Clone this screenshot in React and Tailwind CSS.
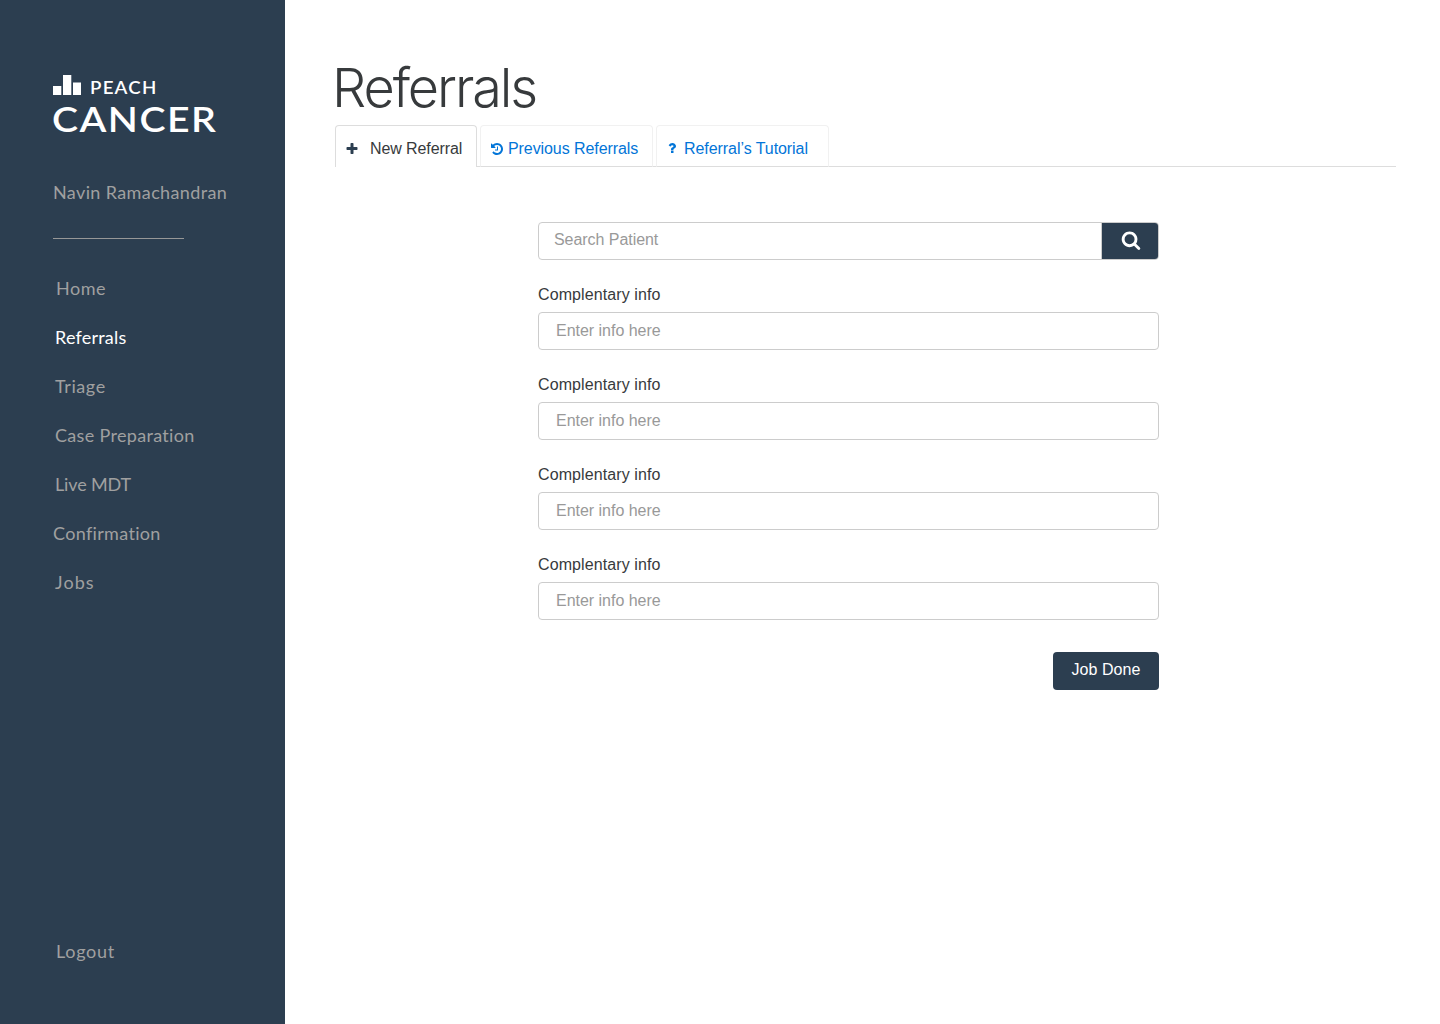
const ICONS = {
  plus: 'M1600 736v192q0 40-28 68t-68 28h-416v416q0 40-28 68t-68 28h-192q-40 0-68-28t-28-68v-416h-416q-40 0-68-28t-28-68v-192q0-40 28-68t68-28h416v-416q0-40 28-68t68-28h192q40 0 68 28t28 68v416h416q40 0 68 28t28 68z',
  search:
    'M1216 832q0-185-131.5-316.5t-316.5-131.5-316.5 131.5-131.5 316.5 131.5 316.5 316.5 131.5 316.5-131.5 131.5-316.5zm512 832q0 52-38 90t-90 38q-54 0-90-38l-343-342q-179 124-399 124-143 0-273.5-55.5t-225-150-150-225-55.5-273.5 55.5-273.5 150-225 225-150 273.5-55.5 273.5 55.5 225 150 150 225 55.5 273.5q0 220-124 399l343 343q37 37 37 90z',
  history:
    'M1664 896q0 156-61 298t-164 245-245 164-298 61q-172 0-327-72.5t-264-204.5q-7-10-6.5-22.5t8.5-20.5l137-138q10-9 25-9 16 2 23 12 73 95 179 147t225 52q104 0 198.5-40.5t163.5-109.5 109.5-163.5 40.5-198.5-40.5-198.5-109.5-163.5-163.5-109.5-198.5-40.5q-98 0-188 35.5t-160 101.5l137 138q31 30 14 69-17 40-59 40h-448q-26 0-45-19t-19-45v-448q0-42 40-59 39-17 69 14l130 129q107-101 244.5-156.5t284.5-55.5q156 0 298 61t245 164 164 245 61 298zm-640-288v448q0 14-9 23t-23 9h-320q-14 0-23-9t-9-23v-64q0-14 9-23t23-9h224v-352q0-14 9-23t23-9h64q14 0 23 9t9 23z',
  question:
    'M1088 1256v240q0 16-12 28t-28 12h-240q-16 0-28-12t-12-28v-240q0-16 12-28t28-12h240q16 0 28 12t12 28zm316-600q0 54-15.5 101t-35 76.5-55 59.5-57.5 43.5-61 35.5q-41 23-68.5 65t-27.5 67q0 17-12 32.5t-28 15.5h-240q-15 0-25.5-18.5t-10.5-37.5v-45q0-83 65-156.5t143-108.5q59-27 84-56t25-76q0-42-46.5-74t-107.5-32q-65 0-108 29-35 25-107 115-13 16-31 16-12 0-25-8l-164-125q-13-10-15.5-25t5.5-28q160-266 464-266 80 0 161 31t146 83 106 127.5 41 158.5z',
};

function Icon({ name, className }) {
  return (
    <svg viewBox="0 0 1792 1792" fill="currentColor" className={className} aria-hidden="true">
      <path d={ICONS[name]} />
    </svg>
  );
}

const NAV = [
  { label: 'Home', className: 'pl-[3px] tracking-[0.5px]' },
  { label: 'Referrals', className: 'pl-[2px] tracking-[0.2px] text-white', current: true },
  { label: 'Triage', className: 'pl-[2px] tracking-[0.6px]' },
  { label: 'Case Preparation', className: 'pl-[2px] tracking-[0.32px]' },
  { label: 'Live MDT', className: 'pl-[2px] tracking-[-0.15px]' },
  { label: 'Confirmation', className: 'tracking-[0.33px]' },
  { label: 'Jobs', className: 'pl-[2px] tracking-[1.1px]' },
];

function Sidebar() {
  return (
    <aside className="flex w-[285px] shrink-0 flex-col bg-[#2c3e50] pl-[53px] font-['Lato',sans-serif] text-[18px] text-[#a0a0a0]">
      <div className="mt-[75px] flex h-5 items-end text-white">
        <svg viewBox="0 0 28 20" className="h-5 w-7" fill="currentColor" aria-hidden="true">
          <path d="M0 11h8.300v9H0zM10 0h8.300v20H10zM20 7.500h8v12.500h-8z" />
        </svg>
        <span className="ml-[9px] origin-left scale-x-[1.1] text-[17px] leading-[14px] font-semibold tracking-[1.1px]">PEACH</span>
      </div>
      <div className="mt-[7px] ml-[-1px] h-[32px] w-[150px] origin-left scale-x-[1.12] text-[35px] leading-[32px] font-semibold tracking-[1.3px] text-white">CANCER</div>
      <div className="mt-[46px] h-6 leading-6 tracking-[0.38px] whitespace-nowrap">Navin Ramachandran</div>
      <div className="mt-[34px] h-px w-[131px] bg-[#979797]" />
      <nav className="mt-[25px] flex flex-col">
        {NAV.map((item) => (
          <a key={item.label} aria-current={item.current ? 'page' : undefined} className={`flex h-[49px] items-center whitespace-nowrap ${item.className}`}>
            {item.label}
          </a>
        ))}
      </nav>
      <a className="mt-auto mb-[61px] h-6 pl-[3px] leading-6 tracking-[0.7px]">Logout</a>
    </aside>
  );
}

function Tabs() {
  return (
    <div className="mt-[8px] flex h-[42px] w-[1061px] text-[16px] leading-[45px] whitespace-nowrap text-[#0275d8]">
      <div className="flex w-[142px] items-center rounded-t border border-b-0 border-[#ddd] pl-[9px] text-[#373a3c]">
        <Icon name="plus" className="mt-[5px] size-[14px] text-[#2c3e50]" />
        <span className="mt-[4px] ml-[11px] tracking-[-0.1px]">New Referral</span>
      </div>
      <div className="w-[3px] border-b border-[#ddd]" />
      <div className="flex w-[173px] items-center rounded-t border border-[#f1f1f1] border-b-[#ddd] pl-[9px]">
        <Icon name="history" className="mt-[5px] size-[14px]" />
        <span className="mt-[5px] ml-[4px] tracking-[-0.08px]">Previous Referrals</span>
      </div>
      <div className="w-[3px] border-b border-[#ddd]" />
      <div className="flex w-[173px] items-center rounded-t border border-[#f1f1f1] border-b-[#ddd] pl-[8px]">
        <Icon name="question" className="mt-[3px] size-[14px]" />
        <span className="mt-[5px] ml-[5px] tracking-[-0.06px]">Referral’s Tutorial</span>
      </div>
      <div className="flex-1 border-b border-[#ddd]" />
    </div>
  );
}

function Field() {
  return (
    <label className="flex flex-col">
      <span className="mt-[24px] h-[21px] leading-[21px] tracking-[0.1px]">Complentary info</span>
      <div className="mt-[7px] flex h-[38px] rounded border border-[#ccc]">
        <input placeholder="Enter info here" className="w-full pb-px pl-[17px] tracking-[-0.02px] outline-none placeholder:text-[#999]" />
      </div>
    </label>
  );
}

export default function App() {
  return (
    <div className="flex h-[1024px] w-[1440px] overflow-hidden bg-white font-['Liberation_Sans',Arial,sans-serif] text-[16px] text-[#373a3c]">
      <Sidebar />
      <main className="flex flex-1 flex-col pl-[50px]">
        <h1 className="mt-[59px] ml-[-3px] h-[58px] font-['Inter',sans-serif] text-[54px] leading-[57px] font-light tracking-[-2.1px]">Referrals</h1>
        <Tabs />
        <form className="mt-[55px] ml-[203px] flex w-[621px] flex-col">
          <div className="flex h-[38px] overflow-hidden rounded border border-[#ccc]">
            <input placeholder="Search Patient" className="flex-1 pb-[3px] pl-[15px] tracking-[-0.05px] outline-none placeholder:text-[#999]" />
            <button type="button" aria-label="Search" className="flex w-[57px] items-center border-l border-[#ccc] bg-[#2c3e50] pb-[2px] pl-[19px] text-white">
              <Icon name="search" className="size-5" />
            </button>
          </div>
          <Field />
          <Field />
          <Field />
          <Field />
          <button type="button" className="mt-8 h-[38px] w-[106px] self-end rounded bg-[#2c3e50] pb-[3px] tracking-[0.05px] text-white">
            Job Done
          </button>
        </form>
      </main>
    </div>
  );
}
